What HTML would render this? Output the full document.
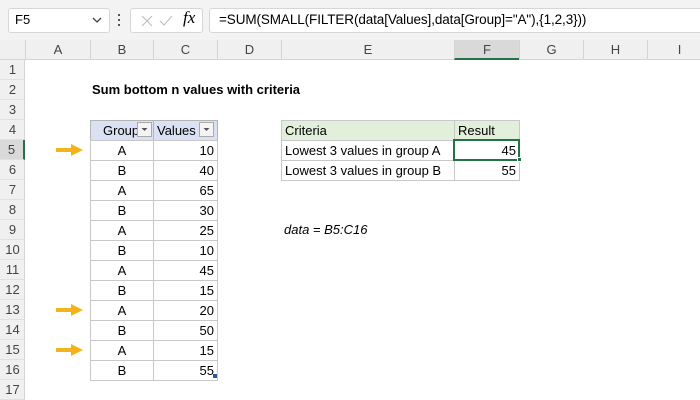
<!DOCTYPE html><html><head><style>
body{margin:0;width:700px;height:400px;overflow:hidden;background:#fff;font-family:"Liberation Sans",Calibri,sans-serif;font-size:13px;position:relative}
.a{position:absolute;box-sizing:border-box}
.t{white-space:nowrap;line-height:20px}
</style></head><body>
<div class="a" style="left:0;top:0;width:700px;height:40px;background:#f3f3f3"></div>
<div class="a" style="left:8px;top:8px;width:102px;height:25px;background:#fff;border:1px solid #d6d6d6;border-radius:3px"></div>
<div class="a t" style="left:15px;top:10px">F5</div>
<svg class="a" style="left:92px;top:16px" width="10" height="8"><path d="M1 2l4 4 4-4" stroke="#444" fill="none" stroke-width="1.3"/></svg>
<div class="a" style="left:118px;top:14px;width:2px;height:2px;background:#555;box-shadow:0 5px #555,0 10px #555"></div>
<div class="a" style="left:130px;top:8px;width:73px;height:25px;background:#fff;border:1px solid #d6d6d6;border-radius:3px"></div>
<svg class="a" style="left:140px;top:14px" width="60" height="14"><path d="M2 2l10 10M12 2L2 12" stroke="#bbb" fill="none"/><path d="M20 7l4 4 8-9" stroke="#bbb" fill="none"/></svg>
<div class="a" style="left:183px;top:8px;font-family:'Liberation Serif',serif;font-style:italic;font-size:17px">fx</div>
<div class="a" style="left:209px;top:8px;width:495px;height:25px;background:#fff;border:1px solid #d6d6d6;border-radius:3px"></div>
<div class="a t" style="left:219px;top:10px;font-size:13.5px;letter-spacing:-0.1px">=SUM(SMALL(FILTER(data[Values],data[Group]="A"),{1,2,3}))</div>
<div id="g"></div>
<script>
let h='';
const cols=[['',0,25],['A',25,90],['B',90,153],['C',153,217],['D',217,281],['E',281,454],['F',454,519],['G',519,583],['H',583,647],['I',647,711]];
h+='<div class="a" style="left:0;top:40px;width:700px;height:20px;background:#f0f0f0;border-bottom:1px solid #d4d4d4"></div>';
h+='<div class="a" style="left:0;top:60px;width:25px;height:340px;background:#f0f0f0;border-right:1px solid #d4d4d4"></div>';
cols.forEach((c,i)=>{if(i==0)return;h+=`<div class="a t" style="left:${c[1]}px;top:40px;width:${c[2]-c[1]}px;text-align:center;color:#444;border-left:1px solid #d4d4d4;${c[0]=='F'?'background:#d9d9d9;border-bottom:2px solid #217346;height:20px':''}">${c[0]}</div>`});
for(let r=1;r<=17;r++){let y=60+(r-1)*20;h+=`<div class="a t" style="left:0;top:${y}px;width:25px;text-align:center;color:#444;border-bottom:1px solid #e0e0e0;height:20px;${r==5?'background:#d9d9d9;border-right:2px solid #217346':''}">${r}</div>`}
h+='<div class="a t" style="left:92px;top:80px;font-weight:bold">Sum bottom n values with criteria</div>';
const d=[['A',10],['B',40],['A',65],['B',30],['A',25],['B',10],['A',45],['B',15],['A',20],['B',50],['A',15],['B',55]];
h+='<div class="a t" style="left:90px;top:120px;width:64px;height:21px;background:#d9e1f2;border:1px solid #b4b4b4;padding-left:12px">Group</div>';
h+='<div class="a t" style="left:153px;top:120px;width:65px;height:21px;background:#d9e1f2;border:1px solid #b4b4b4;padding-left:3px">Values</div>';
[137,199].forEach(x=>h+=`<div class="a" style="left:${x}px;top:122px;width:15px;height:15px;background:#f4f4f4;border:1px solid #aaa"><svg width="13" height="13"><path d="M3.5 5h6l-3 3z" fill="#555"/></svg></div>`);
d.forEach((v,i)=>{let y=140+i*20;h+=`<div class="a t" style="left:90px;top:${y}px;width:64px;height:21px;border:1px solid #c8c8c8;text-align:center">${v[0]}</div><div class="a t" style="left:153px;top:${y}px;width:65px;height:21px;border:1px solid #c8c8c8;text-align:right;padding-right:3px">${v[1]}</div>`});
[5,13,15].forEach(r=>{let y=60+(r-1)*20+10;h+=`<svg class="a" style="left:55px;top:${y-6}px" width="30" height="12"><path d="M1 6H18" stroke="#f4b31b" stroke-width="4"/><path d="M16 0L28 6L16 12z" fill="#f4b31b"/></svg>`});
h+='<div class="a t" style="left:281px;top:120px;width:174px;height:21px;background:#e2efda;border:1px solid #c8c8c8;padding-left:3px">Criteria</div>';
h+='<div class="a t" style="left:454px;top:120px;width:66px;height:21px;background:#e2efda;border:1px solid #c8c8c8;padding-left:3px">Result</div>';
[['Lowest 3 values in group A',45],['Lowest 3 values in group B',55]].forEach((v,i)=>{let y=140+i*20;h+=`<div class="a t" style="left:281px;top:${y}px;width:174px;height:21px;border:1px solid #c8c8c8;padding-left:3px">${v[0]}</div><div class="a t" style="left:454px;top:${y}px;width:66px;height:21px;border:1px solid #c8c8c8;text-align:right;padding-right:3px">${v[1]}</div>`});
h+='<div class="a" style="left:453px;top:139px;width:67px;height:22px;border:2px solid #217346"></div><div class="a" style="left:517px;top:157px;width:5px;height:5px;background:#217346;border:1px solid #fff"></div>';
h+='<div class="a t" style="left:284px;top:220px;font-style:italic">data = B5:C16</div>';
h+='<div class="a" style="left:213px;top:374px;width:4px;height:4px;background:#2f5597"></div>';
document.getElementById('g').innerHTML=h;
</script>
</body></html>
